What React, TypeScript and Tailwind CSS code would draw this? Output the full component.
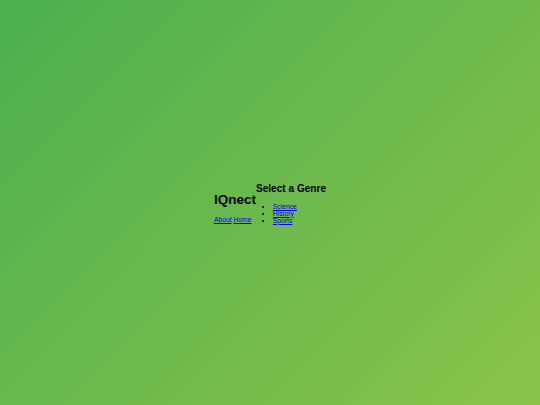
import React from "react";

const genres = ["Science", "History", "Sports"];

export default function App() {
  return (
    <div className="flex h-[405px] w-[540px] items-center justify-center bg-[linear-gradient(135deg,#4caf50,#8bc34a)] font-['Liberation_Sans',Arial,sans-serif] leading-[normal] text-black">
      <header>
        <h1 className="my-[9px] text-[13.5px] font-bold leading-[normal]">IQnect</h1>
        <nav className="text-[6.75px] leading-[normal]">
          <a href="#" className="text-[#0000ee] underline">About</a>{" "}
          <a href="#" className="text-[#0000ee] underline">Home</a>
        </nav>
      </header>
      <main>
        <h2 className="my-[8.4px] text-[10.1px] font-bold leading-[normal]">Select a Genre</h2>
        <ul className="my-[6.75px] list-disc pl-[16.9px] text-[6.75px] leading-[normal]">
          {genres.map((g) => (
            <li key={g}>
              <a href="#" className="text-[#0000ee] underline">{g}</a>
            </li>
          ))}
        </ul>
      </main>
    </div>
  );
}
